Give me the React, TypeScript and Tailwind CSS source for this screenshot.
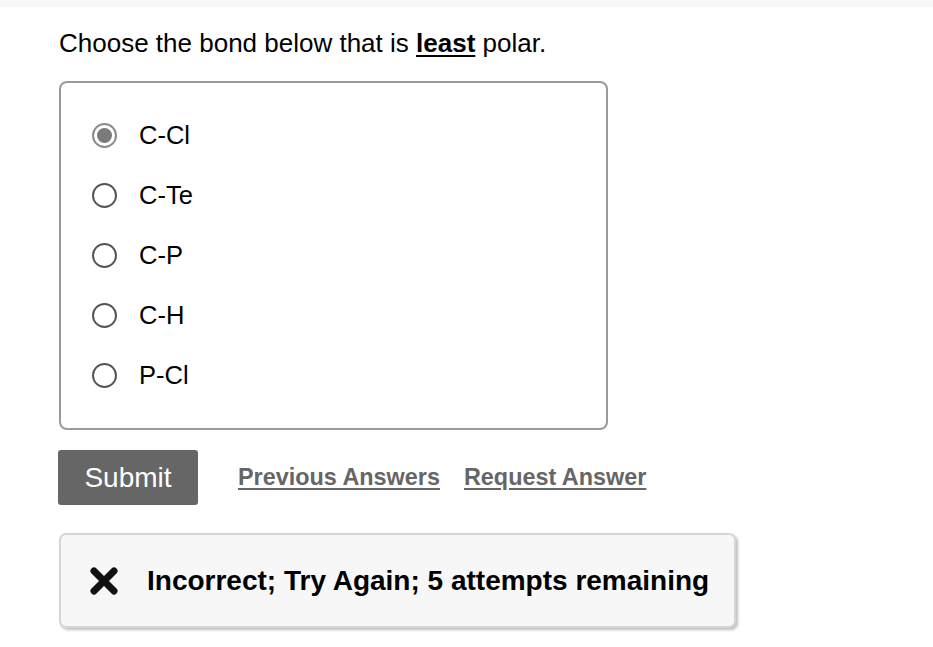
import React, { useState } from 'react'

const options = ['C-Cl', 'C-Te', 'C-P', 'C-H', 'P-Cl']

export default function App() {
  const [selected, setSelected] = useState('C-Cl')

  return (
    <div className="min-h-screen bg-white font-['Liberation_Sans',Arial,sans-serif] text-black">
      <div className="h-[7px] bg-[#f7f7f7]" />
      <div className="pl-[59px] pt-[21px]">
        <p className="text-[26px] leading-[30px]">
          Choose the bond below that is <b className="underline underline-offset-[3px]">least</b> polar.
        </p>

        {/* Options */}
        <div className="mt-[23px] w-[549px] rounded-[8px] border-2 border-[#9a9a9a] pt-[22px] pb-[23px] pl-[31px]">
          {options.map((opt) => (
            <label
              key={opt}
              className="flex h-[60px] cursor-pointer items-center gap-[22px]"
              onClick={() => setSelected(opt)}
            >
              <Radio checked={selected === opt} />
              <span className="text-[25.5px]">{opt}</span>
            </label>
          ))}
        </div>

        {/* Actions */}
        <div className="mt-[20px] flex items-center">
          <button className="-ml-px h-[55px] w-[140px] rounded-[3px] bg-[#666] text-[28px] text-white">
            Submit
          </button>
          <a className="ml-[40px] text-[23.4px] font-bold text-[#666] underline underline-offset-[3px]">
            Previous Answers
          </a>
          <a className="ml-[24px] text-[23.4px] font-bold text-[#666] underline underline-offset-[3px]">
            Request Answer
          </a>
        </div>

        {/* Feedback */}
        <div className="mt-[28px] flex h-[95px] w-[677px] items-center rounded-[7px] border-2 border-[#d6d6d6] bg-[#f7f7f7] pl-[28px] shadow-[2px_2px_3px_rgba(0,0,0,0.25)]">
          <svg width="30" height="30" viewBox="0 0 30 30" className="shrink-0">
            <path d="M5 5 L25 25 M25 5 L5 25" stroke="#111" strokeWidth="7" strokeLinecap="round" />
          </svg>
          <span className="ml-[28px] text-[28px] font-bold">
            Incorrect; Try Again; 5 attempts remaining
          </span>
        </div>
      </div>
    </div>
  )
}

function Radio({ checked }: { checked: boolean }) {
  return (
    <span
      className={
        checked
          ? 'flex h-[25px] w-[25px] shrink-0 items-center justify-center rounded-full border-2 border-[#8a8a8a] bg-white'
          : 'flex h-[25px] w-[25px] shrink-0 items-center justify-center rounded-full border-2 border-[#555] bg-white'
      }
    >
      {checked && <span className="h-[15px] w-[15px] rounded-full bg-[#7a7a7a]" />}
    </span>
  )
}
